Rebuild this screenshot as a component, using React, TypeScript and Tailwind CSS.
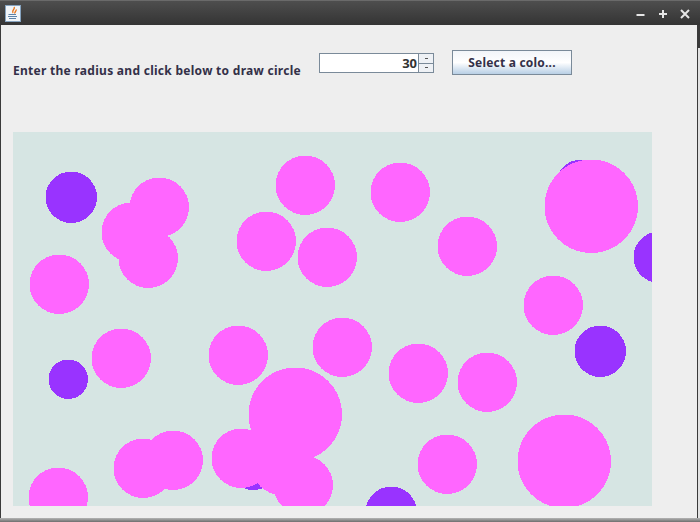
const purple: [number, number, number][] = [
  [71, 197, 26],
  [581, 185, 26],
  [659, 257, 26],
  [600, 351, 26],
  [68, 379, 20],
  [391, 512, 26],
  [253, 464, 26],
]

const pink: [number, number, number][] = [
  [159, 207, 30],
  [131, 232, 30],
  [148, 258, 30],
  [305, 185, 30],
  [400, 192, 30],
  [266, 241, 30],
  [327, 257, 30],
  [467, 246, 30],
  [59, 284, 30],
  [553, 305, 30],
  [121, 358, 30],
  [238, 355, 30],
  [342, 347, 30],
  [418, 373, 30],
  [487, 382, 30],
  [143, 468, 30],
  [173, 460, 30],
  [447, 464, 30],
  [58, 497, 30],
  [241, 458, 30],
  [281, 465, 30],
  [303, 485, 30],
  [295, 414, 47],
  [591, 206, 47],
  [564, 461, 47],
]

function JavaIcon() {
  return (
    <svg width="16" height="17" viewBox="0 0 16 17" className="block">
      <rect x="0.5" y="0.5" width="15" height="16" fill="#f1f5f9" stroke="#86a3bf" />
      <path d="M9 2 C11 4 6 5 8 8 M11 4.5 C12 6 9 7 10 8.5" fill="none" stroke="#e8761c" strokeWidth="1.4" />
      <path d="M3.5 9.5 H11 M3 11.5 H12 M4 13.5 H11" fill="none" stroke="#5d82a8" strokeWidth="1.1" />
    </svg>
  )
}

export default function App() {
  return (
    <div className="w-[700px] h-[522px] flex flex-col overflow-hidden bg-[#3a3a3a] font-['Noto_Sans',sans-serif]">
      <div className="h-[25px] shrink-0 flex items-center justify-between pl-[5px] pr-[9px] bg-gradient-to-b from-[#4e4e4e] to-[#343434] border-t border-[#6a6a6a]">
        <JavaIcon />
        <div className="flex items-center gap-[10px] text-[#e6e6e6] mt-px">
          <svg width="12" height="12" viewBox="0 0 12 12"><path d="M1.5 7 H9.5" stroke="currentColor" strokeWidth="2" /></svg>
          <svg width="12" height="12" viewBox="0 0 12 12"><path d="M6 2 V10 M2 6 H10" stroke="currentColor" strokeWidth="2" /></svg>
          <svg width="12" height="12" viewBox="0 0 12 12"><path d="M2 2 L10 10 M10 2 L2 10" stroke="currentColor" strokeWidth="2" /></svg>
        </div>
      </div>
      <div className="flex-1 flex min-h-0 pl-px">
        <div className="flex-1 min-w-0 bg-[#eeeeee] flex flex-col pl-3">
          <div className="h-[107px] shrink-0 flex items-start">
            <span className="mt-[38px] w-[306px] shrink-0 text-[12px] leading-[16px] font-bold tracking-[0.28px] text-[#333048] whitespace-nowrap">
              Enter the radius and click below to draw circle
            </span>
            <div className="mt-[28px] flex h-[20px] w-[115px] shrink-0 border border-[#7a8a99] bg-white">
              <div className="flex-1 text-right pr-px text-[13px] leading-[18px] font-bold text-[#333333]">30</div>
              <div className="w-[15px] flex flex-col border-l border-[#7a8a99] bg-[#eef1f5]">
                <div className="flex-1 flex items-center justify-center border-b border-[#7a8a99]">
                  <div className="w-[3px] h-px bg-[#555555]" />
                </div>
                <div className="flex-1 flex items-center justify-center">
                  <div className="w-[3px] h-px bg-[#555555]" />
                </div>
              </div>
            </div>
            <button className="mt-[25px] ml-[18px] h-[25px] w-[120px] shrink-0 border border-[#7a8a99] bg-gradient-to-b from-[#f2f5f9] via-[#ffffff] to-[#b8cfe5] text-[12px] font-bold tracking-[0.2px] text-[#333048]">
              Select a colo...
            </button>
          </div>
          <div className="w-[639px] h-[374px] shrink-0 bg-[#d6e5e3] overflow-hidden">
            <svg width="639" height="374" viewBox="13 132 639 374" shapeRendering="crispEdges" className="block">
              {purple.map(([cx, cy, r], i) => (
                <circle key={i} cx={cx + 0.25} cy={cy + 0.25} r={r - 0.25} fill="#9933ff" />
              ))}
              {pink.map(([cx, cy, r], i) => (
                <circle key={i} cx={cx + 0.25} cy={cy + 0.25} r={r - 0.25} fill="#ff66ff" />
              ))}
            </svg>
          </div>
        </div>
        <div className="w-[3px] shrink-0 flex flex-col">
          <div className="h-[23px] shrink-0" />
          <div className="flex-1 ml-px bg-[#e2e2e2]" />
        </div>
      </div>
      <div className="h-[4px] shrink-0 bg-gradient-to-b from-[#b5b5b5] to-[#6e6e6e]" />
    </div>
  )
}
